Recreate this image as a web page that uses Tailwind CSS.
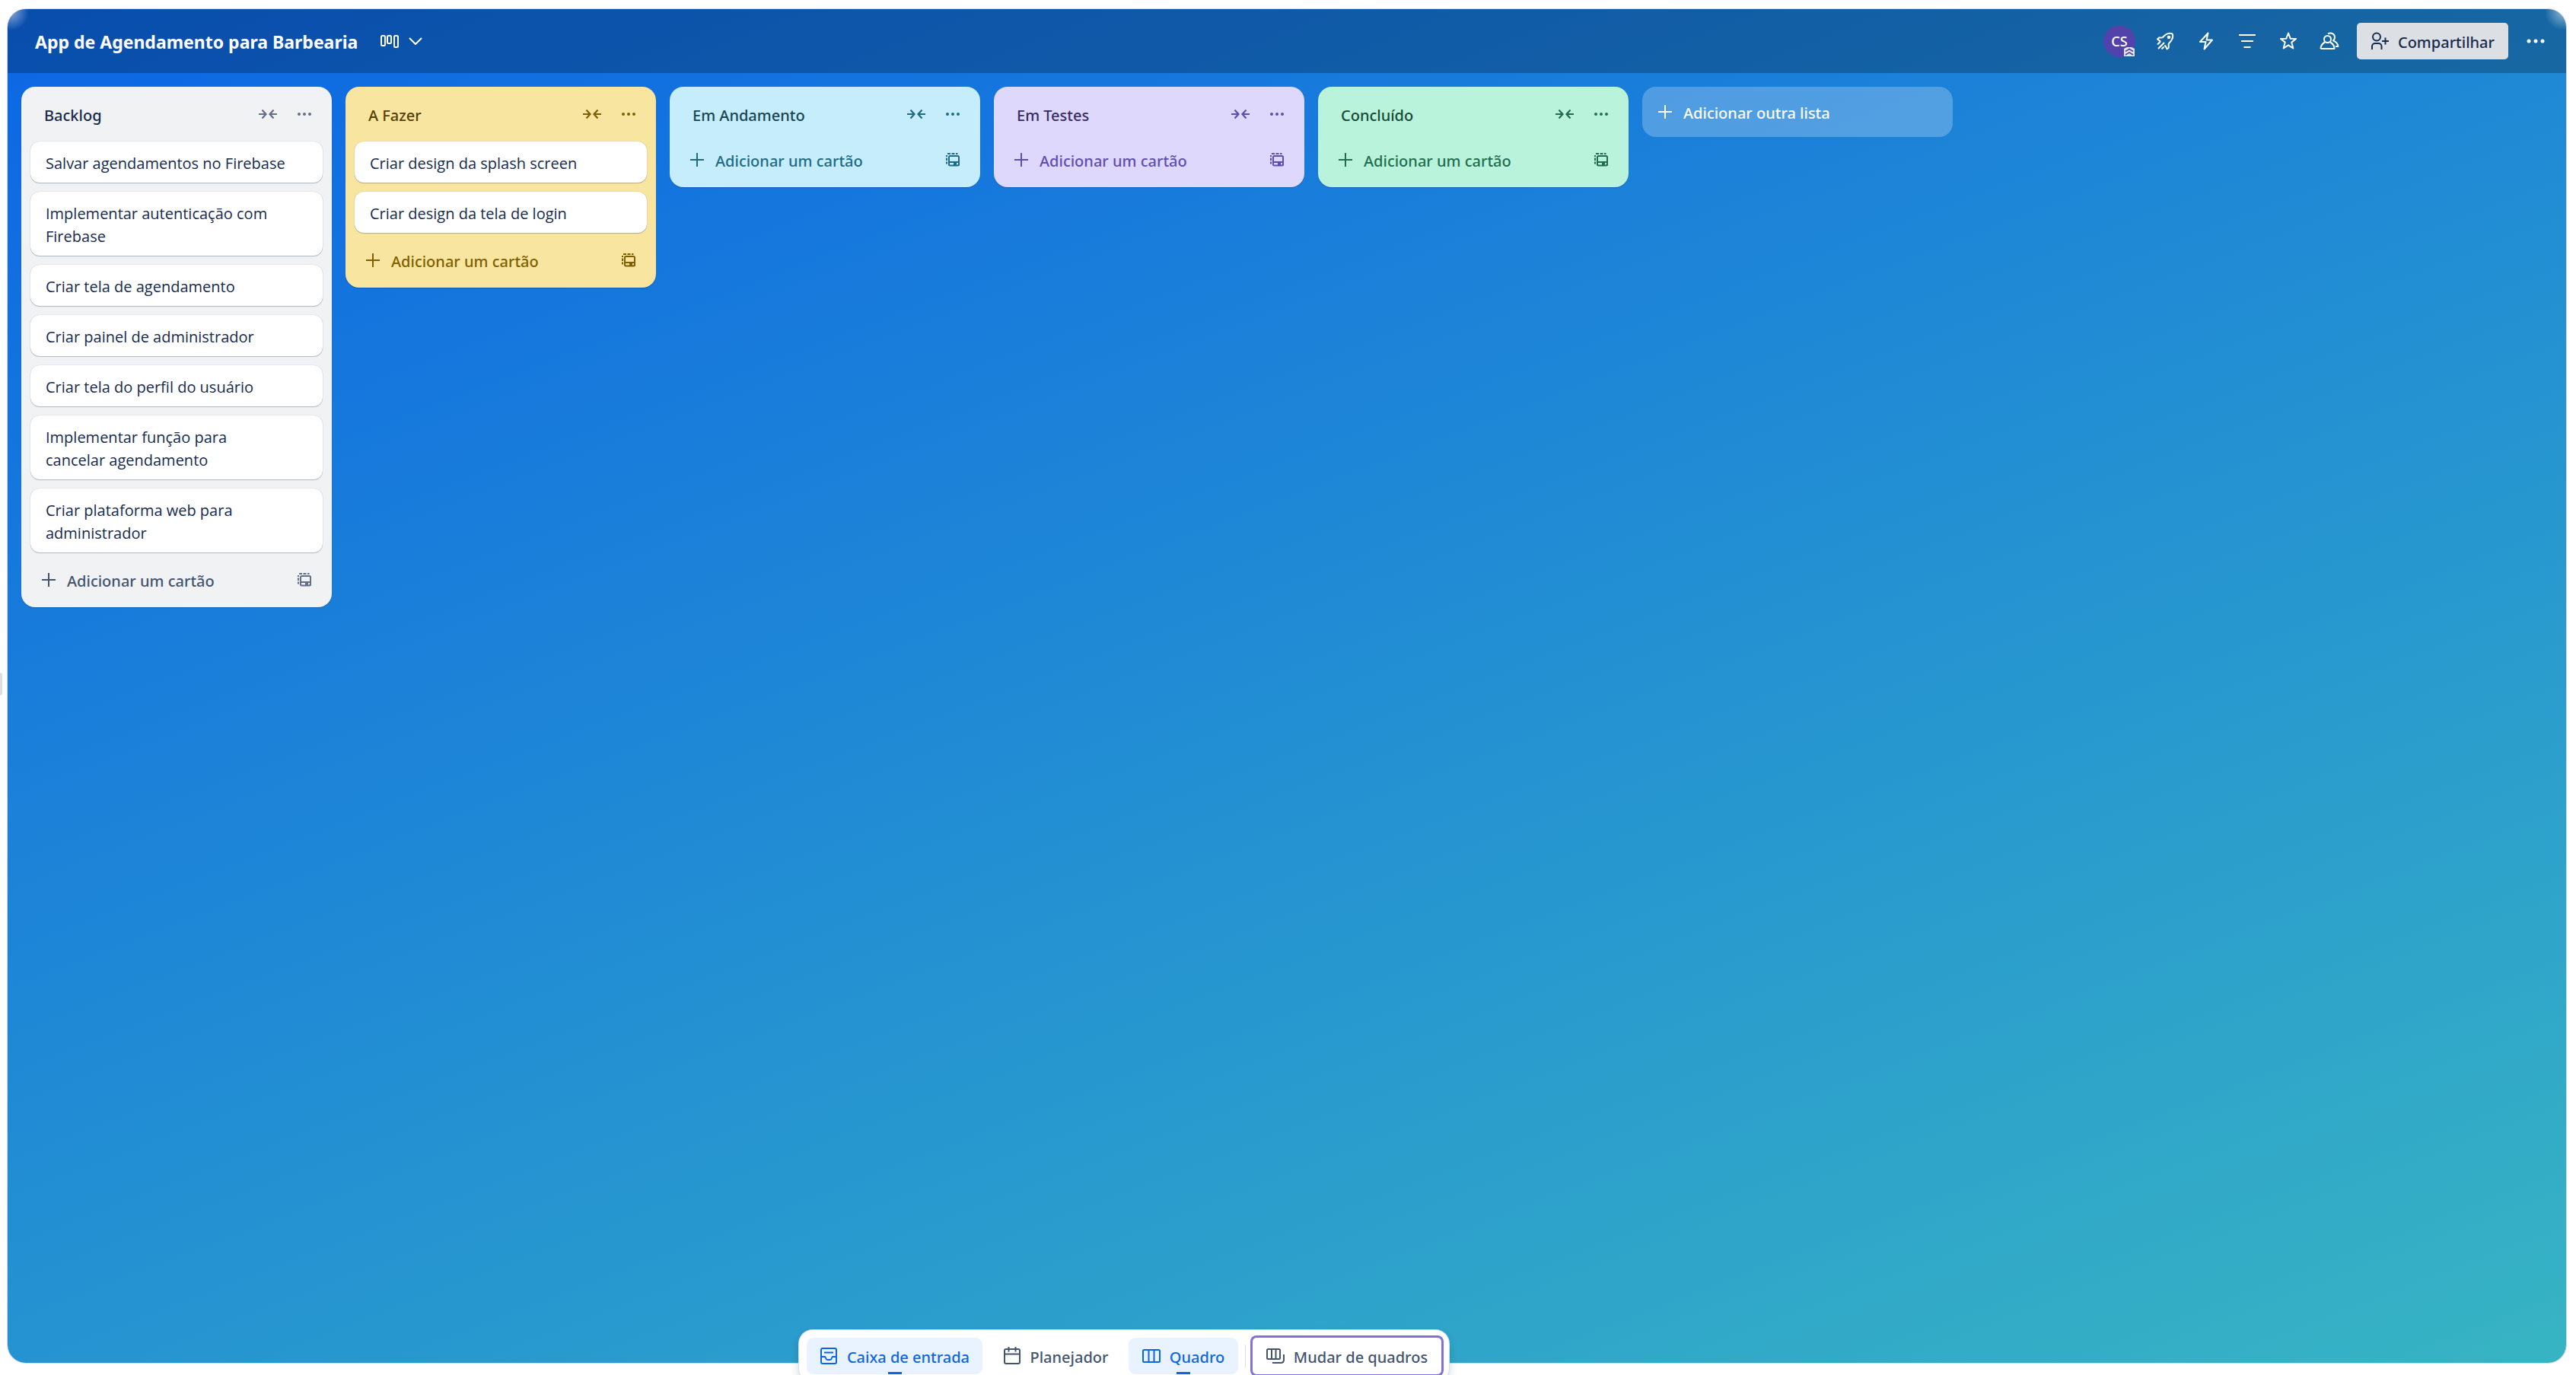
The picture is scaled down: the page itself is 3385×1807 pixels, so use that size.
<!DOCTYPE html>
<html lang="pt-BR">
<head>
<meta charset="utf-8">
<meta name="viewport" content="width=device-width, initial-scale=1">
<title>App de Agendamento para Barbearia</title>
<script src="https://cdn.jsdelivr.net/npm/@tailwindcss/browser@4"></script>
</head>
<body class="relative flex h-screen flex-col overflow-hidden bg-white pt-3 pr-[13px] pb-4 pl-[10px] font-['Noto_Sans','Open_Sans',sans-serif] text-[20px] leading-[30px] text-[#172b4d]">

<!-- shared icons -->
<svg class="hidden" aria-hidden="true">
  <symbol id="collapse" viewBox="0 0 24 24"><path d="M0 12h9.500M4.500 6.500l5 5.500-5 5.500M24 12h-9.500M19.500 6.500l-5 5.500 5 5.500" fill="none" stroke="currentColor" stroke-width="2.200"/></symbol>
  <symbol id="dots" viewBox="0 0 24 24"><circle cx="5" cy="12" r="2" fill="currentColor"/><circle cx="12" cy="12" r="2" fill="currentColor"/><circle cx="19" cy="12" r="2" fill="currentColor"/></symbol>
  <symbol id="plus" viewBox="0 0 24 24"><path d="M12 3v18M3 12h18" fill="none" stroke="currentColor" stroke-width="2"/></symbol>
  <symbol id="template" viewBox="0 0 24 24"><path d="M4 8V6M4 9.500v3.500M4 14.500v3M5 4h4M10.500 4h4M16 4h2.500" fill="none" stroke="currentColor" stroke-width="2"/><rect x="7" y="7" width="13" height="12.500" rx="1.500" fill="none" stroke="currentColor" stroke-width="2"/><path d="M7 15h13" stroke="currentColor" stroke-width="2"/><path d="M13 14h4v6h-4zM18.500 18h2v2h-2z" fill="currentColor"/></symbol>
</svg>

<button type="button" aria-label="Abrir painel lateral" class="absolute top-[884px] left-0 h-[30px] w-[3px] rounded-r bg-[#dcdfe4]"></button>

<main class="flex min-h-0 grow flex-col overflow-hidden rounded-3xl bg-[linear-gradient(159deg,#0c66e4,#37b4c3)] shadow-[0_0_0_1px_#d5d9e0]">

  <header class="flex h-[84px] shrink-0 items-center justify-between bg-black/24 bg-[radial-gradient(circle_at_4px_4px,#ffffff80,transparent_24px),radial-gradient(circle_at_calc(100%-4px)_4px,#ffffff80,transparent_24px)] pr-4 pl-9 text-white">
    <div class="flex items-center">
      <h1 class="pt-[2px] text-[23px] font-bold">App de Agendamento para Barbearia</h1>
      <button type="button" aria-label="Visualizações" class="ml-[27px] flex h-12 items-center gap-[10px]">
        <svg class="size-[30px]" viewBox="0 0 30 30" fill="none" stroke="currentColor" stroke-width="2"><rect x="4" y="8" width="5" height="13" rx="1.500"/><rect x="12" y="8" width="5" height="10" rx="1.500"/><rect x="21" y="8" width="5" height="15" rx="1.500"/></svg>
        <svg class="h-[10px] w-[18px]" viewBox="0 0 18 10" fill="none" stroke="currentColor" stroke-width="2"><path d="M1 1l8 8 8-8"/></svg>
      </button>
    </div>

    <div class="flex items-center gap-3">
      <div class="flex items-center gap-[6px]">
        <button type="button" aria-label="Perfil CS" class="relative mr-[9px] size-[42px] rounded-full bg-[#5243aa] text-[18px] font-medium">CS
          <svg class="absolute right-px bottom-px h-3 w-[14px]" viewBox="0 0 14 12"><path d="M0 2l4-2h6l4 2v10H0z" fill="#e4e6ea"/><path d="M2 5.500l5-3 5 3M2 10l5-3 5 3" fill="none" stroke="#5243aa" stroke-width="1.600"/></svg>
        </button>
        <button type="button" aria-label="Power-Ups" class="grid size-12 place-items-center"><svg class="size-6" viewBox="0 0 24 24" fill="none" stroke="currentColor" stroke-width="2" stroke-linejoin="round"><path d="M8.500 7.500C12 3.500 15.500 1.500 19 1.800c2 0 3.200 1 3.200 3 .2 3.700-1.700 7-5.500 10.700v5.300l-2.200 1.600-2-4.200-1.500.3"/><path d="M8.500 7.500H4L2 9.500l3.500 2.500-.5 1.500"/><circle cx="17" cy="7" r="1.300"/><path d="M2 16.500l4-4M3 22l8-8M7.500 22.500l3-3"/></svg></button>
        <button type="button" aria-label="Automação" class="grid size-12 place-items-center"><svg class="size-6" viewBox="0 0 24 24" fill="none" stroke="currentColor" stroke-width="2" stroke-linejoin="round"><path d="M14.500 1.500L4 13h7.500L9.500 22.500 20 10.500h-7.500z"/></svg></button>
        <button type="button" aria-label="Filtros" class="grid size-12 place-items-center"><svg class="size-6" viewBox="0 0 24 24" fill="none" stroke="currentColor" stroke-width="2"><path d="M1 4h22M4 12h16M7.500 20h9"/></svg></button>
        <button type="button" aria-label="Favoritar quadro" class="grid size-12 place-items-center"><svg class="size-6" viewBox="0 0 24 24" fill="none" stroke="currentColor" stroke-width="2" stroke-linejoin="round"><path d="M12 1.500l2.700 7.200 7.300.3-5.700 4.600 2 7.900L12 17.300l-6.300 4.200 2-7.900L2 9l7.300-.3z"/></svg></button>
        <button type="button" aria-label="Visibilidade" class="grid size-12 place-items-center"><svg class="h-6 w-[26px]" viewBox="0 0 26 24" fill="none" stroke="currentColor" stroke-width="2" stroke-linejoin="round"><circle cx="10.500" cy="9.500" r="4.500"/><path d="M1.500 22c0-4.500 2.500-7 5.500-8.500M14 13.500c3 1.500 5.500 4 5.500 8.500H1.500"/><path d="M11 2.500c4-2.500 9 0 9 4.500 0 2-1 3.500-2 4.300 4 1.700 6 4 6.500 7.700h-3.500"/></svg></button>
      </div>
      <button type="button" class="flex h-12 items-center gap-3 rounded-[5px] bg-[#dcdfe4] px-[18px] font-medium text-[#172b4d]">
        <svg class="size-6" viewBox="0 0 24 24" fill="none" stroke="currentColor" stroke-width="2"><circle cx="8" cy="6.500" r="5"/><path d="M2 23v-4c0-2.500 2-4 4-4h4.500c2 0 4 1.500 4 4v4M19.500 7.500v9M15 12h9"/></svg>
        <span class="pt-1">Compartilhar</span>
      </button>
      <button type="button" aria-label="Menu" class="grid size-12 place-items-center"><svg class="size-6" viewBox="0 0 24 24" fill="currentColor"><circle cx="3" cy="12" r="2.500"/><circle cx="12" cy="12" r="2.500"/><circle cx="21" cy="12" r="2.500"/></svg></button>
    </div>
  </header>

  <div class="flex grow items-start gap-[18px] p-[18px]">

    <section class="w-[408px] shrink-0 rounded-[18px] bg-[#f1f2f4] px-3 pt-3 text-[#626f86] shadow-[0_1px_1px_#091e4240]">
      <div class="flex h-12 items-center pr-3 pl-[18px]">
        <h2 class="grow pt-1 font-medium text-[#172b4d]">Backlog</h2>
        <button type="button" aria-label="Recolher lista"><svg class="size-6"><use href="#collapse"/></svg></button>
        <button type="button" aria-label="Ações da lista" class="ml-6"><svg class="size-6"><use href="#dots"/></svg></button>
      </div>
      <ul class="flex flex-col gap-3 pt-3 font-['Open_Sans','Noto_Sans',sans-serif] text-[#172b4d]">
        <li class="rounded-xl bg-white px-5 pt-[14px] pb-[10px] shadow-[0_1px_1px_#091e4240,0_0_1px_#091e424f]">Salvar agendamentos no Firebase</li>
        <li class="rounded-xl bg-white px-5 pt-[14px] pb-[10px] shadow-[0_1px_1px_#091e4240,0_0_1px_#091e424f]">Implementar autenticação com<br>Firebase</li>
        <li class="rounded-xl bg-white px-5 pt-[14px] pb-[10px] shadow-[0_1px_1px_#091e4240,0_0_1px_#091e424f]">Criar tela de agendamento</li>
        <li class="rounded-xl bg-white px-5 pt-[14px] pb-[10px] shadow-[0_1px_1px_#091e4240,0_0_1px_#091e424f]">Criar painel de administrador</li>
        <li class="rounded-xl bg-white px-5 pt-[14px] pb-[10px] shadow-[0_1px_1px_#091e4240,0_0_1px_#091e424f]">Criar tela do perfil do usuário</li>
        <li class="rounded-xl bg-white px-5 pt-[14px] pb-[10px] shadow-[0_1px_1px_#091e4240,0_0_1px_#091e424f]">Implementar função para<br>cancelar agendamento</li>
        <li class="rounded-xl bg-white px-5 pt-[14px] pb-[10px] shadow-[0_1px_1px_#091e4240,0_0_1px_#091e424f]">Criar plataforma web para<br>administrador</li>
      </ul>
      <div class="flex h-[72px] items-center justify-between px-3">
        <button type="button" class="flex items-center gap-3 font-medium text-[#44546f]"><svg class="size-6"><use href="#plus"/></svg><span class="pt-1">Adicionar um cartão</span></button>
        <button type="button" aria-label="Criar a partir de modelo"><svg class="size-6"><use href="#template"/></svg></button>
      </div>
    </section>

    <section class="w-[408px] shrink-0 rounded-[18px] bg-[#f8e6a0] px-3 pt-3 text-[#7f5f01] shadow-[0_1px_1px_#091e4240]">
      <div class="flex h-12 items-center pr-3 pl-[18px]">
        <h2 class="grow pt-1 font-medium text-[#533f04]">A Fazer</h2>
        <button type="button" aria-label="Recolher lista"><svg class="size-6"><use href="#collapse"/></svg></button>
        <button type="button" aria-label="Ações da lista" class="ml-6"><svg class="size-6"><use href="#dots"/></svg></button>
      </div>
      <ul class="flex flex-col gap-3 pt-3 font-['Open_Sans','Noto_Sans',sans-serif] text-[#172b4d]">
        <li class="rounded-xl bg-white px-5 pt-[14px] pb-[10px] shadow-[0_1px_1px_#091e4240,0_0_1px_#091e424f]">Criar design da splash screen</li>
        <li class="rounded-xl bg-white px-5 pt-[14px] pb-[10px] shadow-[0_1px_1px_#091e4240,0_0_1px_#091e424f]">Criar design da tela de login</li>
      </ul>
      <div class="flex h-[72px] items-center justify-between px-3">
        <button type="button" class="flex items-center gap-3 font-medium"><svg class="size-6"><use href="#plus"/></svg><span class="pt-1">Adicionar um cartão</span></button>
        <button type="button" aria-label="Criar a partir de modelo"><svg class="size-6"><use href="#template"/></svg></button>
      </div>
    </section>

    <section class="w-[408px] shrink-0 rounded-[18px] bg-[#c6edfb] px-3 pt-3 text-[#206a83] shadow-[0_1px_1px_#091e4240]">
      <div class="flex h-12 items-center pr-3 pl-[18px]">
        <h2 class="grow pt-1 font-medium text-[#164555]">Em Andamento</h2>
        <button type="button" aria-label="Recolher lista"><svg class="size-6"><use href="#collapse"/></svg></button>
        <button type="button" aria-label="Ações da lista" class="ml-6"><svg class="size-6"><use href="#dots"/></svg></button>
      </div>
      <div class="flex h-[72px] items-center justify-between px-3">
        <button type="button" class="flex items-center gap-3 font-medium"><svg class="size-6"><use href="#plus"/></svg><span class="pt-1">Adicionar um cartão</span></button>
        <button type="button" aria-label="Criar a partir de modelo"><svg class="size-6"><use href="#template"/></svg></button>
      </div>
    </section>

    <section class="w-[408px] shrink-0 rounded-[18px] bg-[#dfd8fd] px-3 pt-3 text-[#5e4db2] shadow-[0_1px_1px_#091e4240]">
      <div class="flex h-12 items-center pr-3 pl-[18px]">
        <h2 class="grow pt-1 font-medium text-[#352c63]">Em Testes</h2>
        <button type="button" aria-label="Recolher lista"><svg class="size-6"><use href="#collapse"/></svg></button>
        <button type="button" aria-label="Ações da lista" class="ml-6"><svg class="size-6"><use href="#dots"/></svg></button>
      </div>
      <div class="flex h-[72px] items-center justify-between px-3">
        <button type="button" class="flex items-center gap-3 font-medium"><svg class="size-6"><use href="#plus"/></svg><span class="pt-1">Adicionar um cartão</span></button>
        <button type="button" aria-label="Criar a partir de modelo"><svg class="size-6"><use href="#template"/></svg></button>
      </div>
    </section>

    <section class="w-[408px] shrink-0 rounded-[18px] bg-[#baf3db] px-3 pt-3 text-[#216e4e] shadow-[0_1px_1px_#091e4240]">
      <div class="flex h-12 items-center pr-3 pl-[18px]">
        <h2 class="grow pt-1 font-medium text-[#164b35]">Concluído</h2>
        <button type="button" aria-label="Recolher lista"><svg class="size-6"><use href="#collapse"/></svg></button>
        <button type="button" aria-label="Ações da lista" class="ml-6"><svg class="size-6"><use href="#dots"/></svg></button>
      </div>
      <div class="flex h-[72px] items-center justify-between px-3">
        <button type="button" class="flex items-center gap-3 font-medium"><svg class="size-6"><use href="#plus"/></svg><span class="pt-1">Adicionar um cartão</span></button>
        <button type="button" aria-label="Criar a partir de modelo"><svg class="size-6"><use href="#template"/></svg></button>
      </div>
    </section>

    <button type="button" class="flex h-[66px] w-[408px] shrink-0 items-center gap-3 rounded-[18px] bg-white/24 px-[18px] font-medium text-white"><svg class="size-6"><use href="#plus"/></svg><span class="pt-1">Adicionar outra lista</span></button>
  </div>
</main>

<!-- floating navigation, partly below the window edge -->
<nav class="absolute -bottom-[9px] left-[1050px] flex items-center rounded-[18px] bg-white px-[10px] py-[10px] font-medium text-[#44546f] shadow-[0_0_0_1px_#d5e3ee,0_6px_12px_#091e4233]">
  <button type="button" class="relative flex h-12 w-[231px] items-center justify-center gap-3 rounded-[9px] bg-[#e9f2ff] text-[#0c66e4]">
    <svg class="size-6" viewBox="0 0 24 24" fill="none" stroke="currentColor" stroke-width="2"><rect x="2" y="2" width="20" height="20" rx="2"/><path d="M6 7.500h12M2 13h5c1 0 1 4 3 4h4c2 0 2-4 3-4h5"/></svg>
    <span class="pt-1">Caixa de entrada</span>
    <span class="absolute bottom-0 left-1/2 h-[3px] w-[18px] -translate-x-1/2 bg-[#0c66e4]"></span>
  </button>
  <button type="button" class="ml-[9px] flex h-12 w-[174px] items-center justify-center gap-3">
    <svg class="size-6" viewBox="0 0 24 24" fill="none" stroke="currentColor" stroke-width="2"><rect x="2" y="3" width="20" height="19" rx="2"/><path d="M2 9.500h20M7.500 0v6.500M16.500 0v6.500"/></svg>
    <span class="pt-1">Planejador</span>
  </button>
  <button type="button" class="relative ml-[9px] flex h-12 w-[144px] items-center justify-center gap-3 rounded-[9px] bg-[#e9f2ff] text-[#0c66e4]">
    <svg class="size-6" viewBox="0 0 24 24" fill="none" stroke="currentColor" stroke-width="2"><rect x="1" y="4" width="22" height="16" rx="1.500"/><path d="M8.500 4v16M15.500 4v16"/></svg>
    <span class="pt-1">Quadro</span>
    <span class="absolute bottom-0 left-1/2 h-[3px] w-[18px] -translate-x-1/2 bg-[#0c66e4]"></span>
  </button>
  <span class="mr-[9px] ml-[9px] h-[30px] w-px bg-[#dcdfe4]"></span>
  <button type="button" class="flex h-12 w-[248px] items-center justify-center gap-3 rounded-[5px] ring-3 ring-[#8270db]">
    <svg class="size-6" viewBox="0 0 24 24" fill="none" stroke="currentColor" stroke-width="2"><rect x="1" y="3" width="17" height="13" rx="1.500"/><path d="M7 3v13M12.500 3v13M8 21h11c2.500 0 4-1.500 4-4v-7"/></svg>
    <span class="pt-1">Mudar de quadros</span>
  </button>
</nav>
</body>
</html>
